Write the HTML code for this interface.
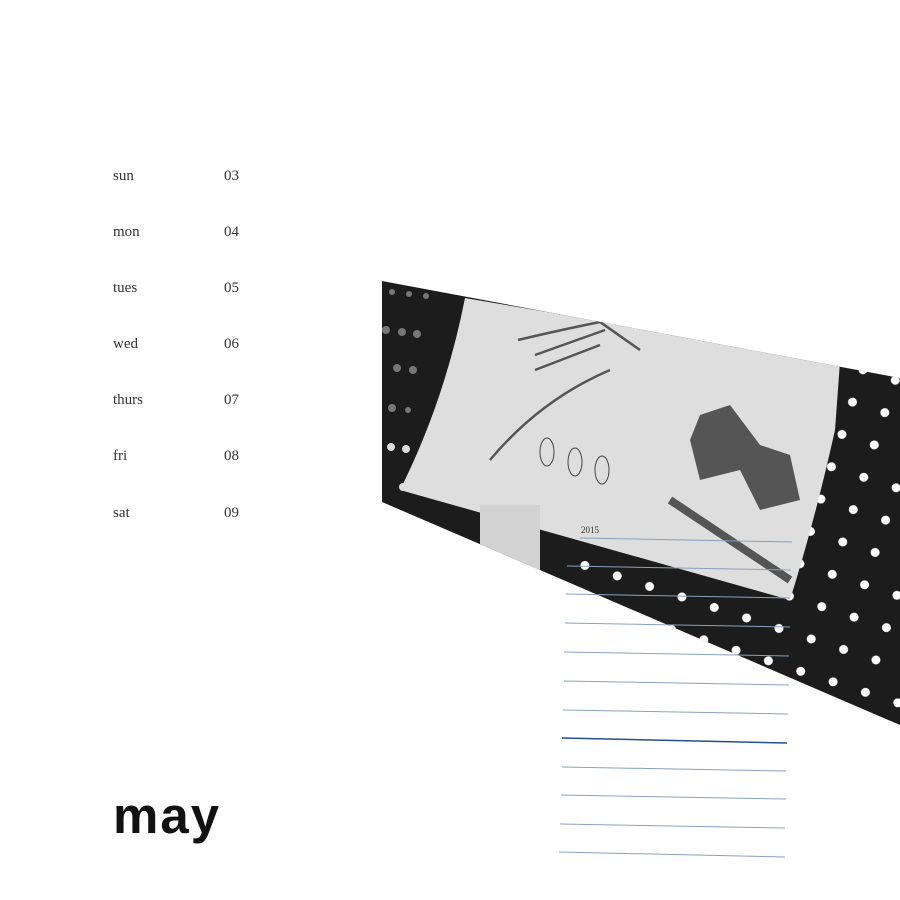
<!DOCTYPE html>
<html><head><style>
body{margin:0;width:900px;height:900px;background:#fff;position:relative;overflow:hidden;font-family:"Liberation Serif",serif;}
.d{position:absolute;left:113px;font-size:15px;color:#333;}
.n{position:absolute;left:224px;font-size:15px;color:#333;}
.may{position:absolute;left:113px;top:786px;font-family:"Liberation Sans",sans-serif;font-weight:bold;font-size:51px;color:#111;letter-spacing:2px;}
svg{position:absolute;left:0;top:0}
</style></head><body>
<div class="d" style="top:168px">sun</div><div class="n" style="top:168px">03</div>
<div class="d" style="top:224px">mon</div><div class="n" style="top:224px">04</div>
<div class="d" style="top:280px">tues</div><div class="n" style="top:280px">05</div>
<div class="d" style="top:336px">wed</div><div class="n" style="top:336px">06</div>
<div class="d" style="top:392px">thurs</div><div class="n" style="top:392px">07</div>
<div class="d" style="top:448px">fri</div><div class="n" style="top:448px">08</div>
<div class="d" style="top:505px">sat</div><div class="n" style="top:505px">09</div>
<svg width="900" height="900">
<defs><clipPath id="c"><polygon points="382,281 900,378 900,725 382,502"/></clipPath>
<pattern id="dots" width="34" height="34" patternUnits="userSpaceOnUse" patternTransform="rotate(18)"><circle cx="17" cy="17" r="4.5" fill="#fff"/></pattern></defs>
<g clip-path="url(#c)">
<rect x="380" y="270" width="520" height="460" fill="#1c1c1c"/>
<rect x="560" y="330" width="340" height="400" fill="url(#dots)"/>
<g fill="#777"><circle cx="392" cy="292" r="3"/><circle cx="409" cy="294" r="3"/><circle cx="426" cy="296" r="3"/><circle cx="386" cy="330" r="4"/><circle cx="402" cy="332" r="4"/><circle cx="417" cy="334" r="4"/><circle cx="397" cy="368" r="4"/><circle cx="413" cy="370" r="4"/><circle cx="392" cy="408" r="4"/><circle cx="408" cy="410" r="3"/></g>
<g fill="#ddd"><circle cx="391" cy="447" r="4"/><circle cx="406" cy="449" r="4"/><circle cx="403" cy="487" r="4"/></g>
<path d="M465,298 L840,362 L835,430 Q815,520 790,600 L400,490 Q445,400 465,298Z" fill="#dedede"/>
<rect x="480" y="505" width="60" height="65" fill="#d2d2d2"/>
<path d="M518,340 Q560,330 600,322 L640,350 M535,355 L605,330 M535,370 L600,345 M490,460 Q540,400 610,370" stroke="#555" stroke-width="2.5" fill="none"/>
<path d="M700,415 L730,405 L760,445 L790,455 L800,500 L760,510 L740,470 L700,480 L690,440Z" fill="#555"/>
<path d="M670,500 L790,580" stroke="#555" stroke-width="8"/>
<ellipse cx="547" cy="452" rx="7" ry="14" fill="none" stroke="#444"/>
<ellipse cx="575" cy="462" rx="7" ry="14" fill="none" stroke="#444"/>
<ellipse cx="602" cy="470" rx="7" ry="14" fill="none" stroke="#444"/>
</g>
<g stroke="#8aa0bf" stroke-width="1">
<line x1="580" y1="538" x2="792" y2="542"/>
<line x1="567" y1="566" x2="791" y2="570"/>
<line x1="566" y1="594" x2="790" y2="598"/>
<line x1="565" y1="623" x2="790" y2="627"/>
<line x1="564" y1="652" x2="789" y2="656"/>
<line x1="564" y1="681" x2="789" y2="685"/>
<line x1="563" y1="710" x2="788" y2="714"/>
<line x1="562" y1="738" x2="787" y2="743" stroke="#24508a" stroke-width="1.5"/>
<line x1="562" y1="767" x2="786" y2="771"/>
<line x1="561" y1="795" x2="786" y2="799"/>
<line x1="560" y1="824" x2="785" y2="828"/>
<line x1="559" y1="852" x2="785" y2="857"/>
</g>
<text x="581" y="533" font-size="9" fill="#333" font-family="Liberation Serif,serif">2015</text>
</svg>
<div class="may">may</div>
</body></html>
